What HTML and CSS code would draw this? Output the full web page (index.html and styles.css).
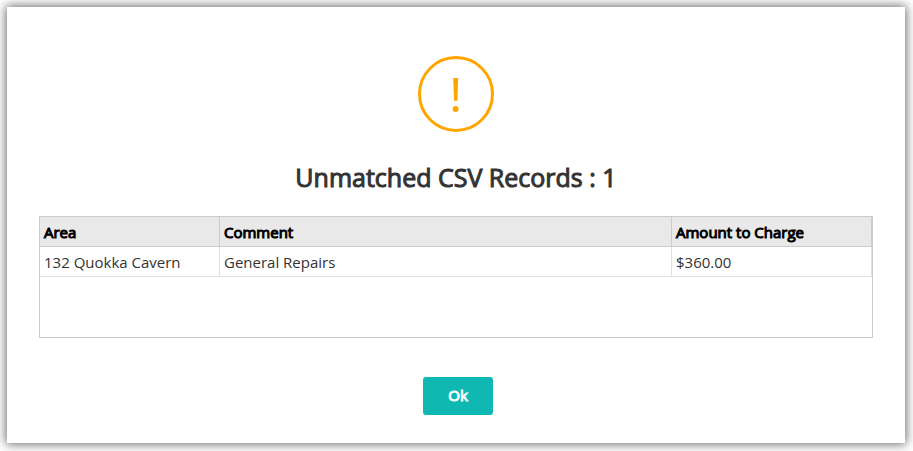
FILE: index.html
```
<!DOCTYPE html>
<html lang="en">

<head>
    <meta charset="UTF-8">
    <meta name="viewport" content="width=device-width, initial-scale=1.0">
    <title>Unmatched CSV Records</title>
    <link rel="stylesheet" href="styles.css">
</head>

<body>
    <div class="modal" role="alertdialog" aria-labelledby="modal-title">
        <svg class="warning-icon" viewBox="0 0 76 76" aria-hidden="true">
            <circle cx="38" cy="38" r="36.5" fill="none" stroke="#ffa500" stroke-width="3" />
            <path d="M35.2 22h5l-.8 22.8h-3.4z" fill="#ffa500" />
            <circle cx="37.6" cy="53" r="3" fill="#ffa500" />
        </svg>

        <h2 class="modal-title" id="modal-title">Unmatched CSV Records : 1</h2>

        <div class="grid">
            <table class="records">
                <thead>
                    <tr>
                        <th class="col-area">Area</th>
                        <th>Comment</th>
                        <th class="col-amount">Amount to Charge</th>
                    </tr>
                </thead>
                <tbody>
                    <tr>
                        <td>132 Quokka Cavern</td>
                        <td>General Repairs</td>
                        <td>$360.00</td>
                    </tr>
                </tbody>
            </table>
        </div>

        <div class="actions">
            <button class="btn-ok" type="button">Ok</button>
        </div>
    </div>
</body>

</html>
```
FILE: styles.css
```
* {
    box-sizing: border-box;
}

body {
    margin: 0;
    padding: 7px 8px 8px 7px;
    background-color: #fff;
    font-family: "Open Sans", Arial, sans-serif;
    color: #333;
}

.modal {
    display: flex;
    flex-direction: column;
    align-items: center;
    padding: 49px 32px 28px;
    background-color: #fff;
    box-shadow: 0 0 10px 1px #666;
}

.warning-icon {
    width: 76px;
    height: 76px;
}

/* regular weight thickened with a stroke */
.modal-title,
.records th,
.btn-ok {
    font-weight: 400;
    -webkit-text-stroke: 1px currentColor;
}

.modal-title {
    margin: 27px 0 21px;
    font-size: 25px;
    line-height: 36px;
}

.grid {
    width: 100%;
    min-height: 122px;
    border: 1px solid #ccc;
}

.records {
    width: 100%;
    border-collapse: separate;
    border-spacing: 0;
    table-layout: fixed;
    font-size: 15px;
    line-height: 20px;
    text-align: left;
}

.records th,
.records td {
    height: 30px;
    padding: 5px 4px 4px;
    border-right: 1px solid #e0e0e0;
    border-bottom: 1px solid #e0e0e0;
}

.records th {
    background-color: #e9e9e9;
    border-color: #ccc;
    color: #000;
}

.col-area {
    width: 180px;
}

.col-amount {
    width: 200px;
}

.actions {
    margin-top: 39px;
    padding-left: 4px;
}

.btn-ok {
    width: 70px;
    height: 38px;
    padding: 0 0 2px;
    border: none;
    border-radius: 3px;
    background-color: #0fb8b0;
    color: #fff;
    font-family: inherit;
    font-size: 15px;
    cursor: pointer;
}

.btn-ok:hover {
    background-color: #0da69f;
}
```
